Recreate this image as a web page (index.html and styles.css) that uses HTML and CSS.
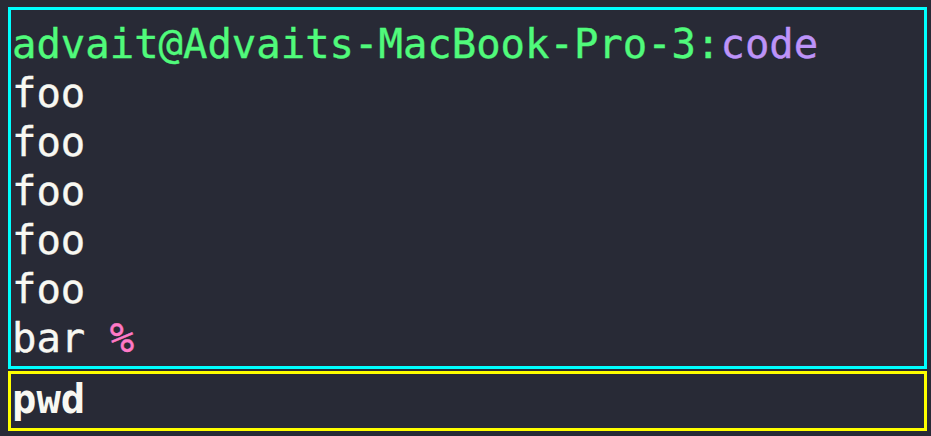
FILE: index.html
```html
<!DOCTYPE html>
<html lang="en">
<head>
    <meta charset="UTF-8">
    <title>Terminal</title>
    <link rel="stylesheet" href="styles.css">
</head>
<body>
    <div class="terminal">
        <div class="output">
            <div class="line"><span class="user">advait@Advaits-MacBook-Pro-3:</span><span class="dir">code</span></div>
            <div class="line">foo</div>
            <div class="line">foo</div>
            <div class="line">foo</div>
            <div class="line">foo</div>
            <div class="line">foo</div>
            <div class="line">bar <span class="mark">%</span></div>
        </div>
        <div class="input">
            <div class="line cmd">pwd</div>
        </div>
    </div>
</body>
</html>
```

FILE: styles.css
```css
body {
    margin: 0;
    padding: 7px 4px 6px 8px;
    background-color: #282a36;
    color: #f8f8f2;
    font-family: "DejaVu Sans Mono", monospace;
    font-size: 40.6px;
}

.terminal {
    display: flex;
    flex-direction: column;
    gap: 2px;
}

.output {
    border: 3px solid #00ffff;
    padding: 10px 1px 3px;
}

.input {
    border: 3px solid #ffff00;
    padding: 1px 1px 4px;
}

.line {
    line-height: 49px;
    white-space: pre;
    -webkit-text-stroke: 0.4px currentColor;
}

.user {
    color: #50fa7b;
}

.dir {
    color: #bd93f9;
}

.mark {
    color: #ff79c6;
}

.cmd {
    font-weight: bold;
    -webkit-text-stroke: 0;
}
```
